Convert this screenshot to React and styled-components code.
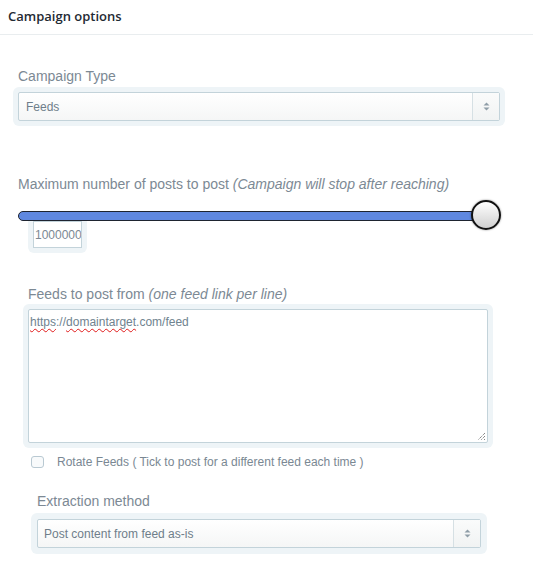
import React from "react";
import styled, { createGlobalStyle } from "styled-components";

const Global = createGlobalStyle`
  html, body { margin: 0; padding: 0; background: #fff; }
  body { font-family: "Liberation Sans", Arial, sans-serif; }
  * { box-sizing: border-box; }
`;

const Page = styled.div`
  width: 533px;
  min-height: 575px;
  background: #fff;
`;

const Header = styled.div`
  height: 35px;
  padding: 0 8px;
  display: flex;
  align-items: center;
  border-bottom: 1px solid #e9edef;
  font-family: "Open Sans", "Segoe UI", sans-serif;
  font-weight: 600;
  font-size: 13px;
  color: #1f2a33;
  padding-bottom: 2px;
`;

const Section = styled.div`
  padding-left: ${(p) => p.$left}px;
  margin-top: ${(p) => p.$top}px;
`;

const Label = styled.div`
  font-size: 14px;
  line-height: 20px;
  color: #7c8994;
  margin-bottom: ${(p) => p.$mb || 0}px;
  white-space: nowrap;
  em { font-style: italic; }
`;

const Glow = styled.div`
  background: #eef4f7;
  border-radius: 6px;
  padding: ${(p) => p.$pad}px;
  margin-left: -${(p) => p.$pad}px;
  width: ${(p) => p.$w}px;
`;

const SelectBox = styled.div`
  display: flex;
  height: 29px;
  border: 1px solid #c3d3da;
  border-radius: 2px;
  background: linear-gradient(#ffffff, #f5f6f6);
  font-size: 12px;
  color: #6f7e8a;
`;

const SelectText = styled.div`
  flex: 1;
  display: flex;
  align-items: center;
  padding-left: ${(p) => p.$pl}px;
`;

const ArrowCell = styled.div`
  width: ${(p) => p.$w}px;
  border-left: 1px solid #d6e0e4;
  display: flex;
  align-items: center;
  justify-content: center;
  background: linear-gradient(#fafbfb, #f1f3f3);
`;

const UpDown = () => (
  <svg width="7" height="9" viewBox="0 0 7 9">
    <path d="M3.5 0.5 L6.5 3.5 H0.5 Z" fill="#8f9ea8" />
    <path d="M3.5 8.5 L6.5 5.5 H0.5 Z" fill="#8f9ea8" />
  </svg>
);

const SliderRow = styled.div`
  position: relative;
  z-index: 1;
  display: flex;
  align-items: center;
  height: 29px;
  width: 483px;
  margin-top: 6px;
`;

const Track = styled.div`
  flex: 1;
  height: 10px;
  margin-right: -4px;
  margin-top: 3px;
  background: #5f88e0;
  border: 1px solid #1e2430;
  border-radius: 5px 0 0 5px;
`;

const Thumb = styled.div`
  position: relative;
  width: 30px;
  height: 30px;
  border-radius: 50%;
  border: 2px solid #111;
  background: linear-gradient(#ffffff, #d0d0d0);
  box-shadow: 0 0 2px rgba(0, 0, 0, 0.5);
`;

const NumGlow = styled.div`
  margin-top: -13px;
  margin-left: 10px;
  width: 59px;
  height: 37px;
  padding: 5px;
  background: #eef4f7;
  border-radius: 6px;
`;

const NumInput = styled.div`
  height: 27px;
  border: 1px solid #c3d3da;
  background: #fff;
  font-size: 12px;
  color: #7b8893;
  display: flex;
  align-items: center;
  padding-left: 1px;
  overflow: hidden;
`;

const TextArea = styled.div`
  position: relative;
  height: 134px;
  border: 1px solid #c3d3da;
  border-radius: 2px;
  background: #fff;
  font-size: 12px;
  line-height: 16px;
  color: #70838f;
  padding: 4px 1px;
`;

const Misspelled = styled.span`
  text-decoration: underline wavy #e01b1b;
  text-decoration-thickness: 1px;
  text-underline-offset: 2px;
`;

const Grip = styled.svg`
  position: absolute;
  right: 1px;
  bottom: 1px;
`;

const CheckRow = styled.label`
  display: flex;
  align-items: center;
  height: 20px;
  margin-top: 4px;
  padding-left: 31px;
  font-size: 12px;
  color: #7a8893;
`;

const Check = styled.span`
  width: 13px;
  height: 12px;
  border: 1px solid #b9c9d2;
  border-radius: 3px;
  background: #f8fafb;
  margin-right: 13px;
`;

export default function App() {
  return (
    <Page>
      <Global />
      <Header>Campaign options</Header>

      <Section $left={18} $top={31}>
        <Label $mb={1}>Campaign Type</Label>
        <Glow $pad={5} $w={492}>
          <SelectBox>
            <SelectText $pl={7}>Feeds</SelectText>
            <ArrowCell $w={27}>
              <UpDown />
            </ArrowCell>
          </SelectBox>
        </Glow>
      </Section>

      <Section $left={18} $top={48}>
        <Label>
          Maximum number of posts to post <em>(Campaign will stop after reaching)</em>
        </Label>
        <SliderRow>
          <Track />
          <Thumb />
        </SliderRow>
        <NumGlow>
          <NumInput>1000000</NumInput>
        </NumGlow>
      </Section>

      <Section $left={28} $top={31}>
        <Label>
          Feeds to post from <em>(one feed link per line)</em>
        </Label>
        <Glow $pad={5} $w={470}>
          <TextArea>
            <Misspelled>https</Misspelled>://<Misspelled>domaintarget</Misspelled>.com/feed
            <Grip width="10" height="10" viewBox="0 0 10 10">
              <path d="M9 2 L2 9 M9 5 L5 9 M9 8 L8 9" stroke="#555" strokeWidth="1" strokeDasharray="1 1" />
            </Grip>
          </TextArea>
        </Glow>
      </Section>

      <CheckRow>
        <Check />
        Rotate Feeds ( Tick to post for a different feed each time )
      </CheckRow>

      <Section $left={37} $top={19}>
        <Label $mb={2}>Extraction method</Label>
        <Glow $pad={6} $w={456}>
          <SelectBox>
            <SelectText $pl={6}>Post content from feed as-is</SelectText>
            <ArrowCell $w={27}>
              <UpDown />
            </ArrowCell>
          </SelectBox>
        </Glow>
      </Section>
    </Page>
  );
}
